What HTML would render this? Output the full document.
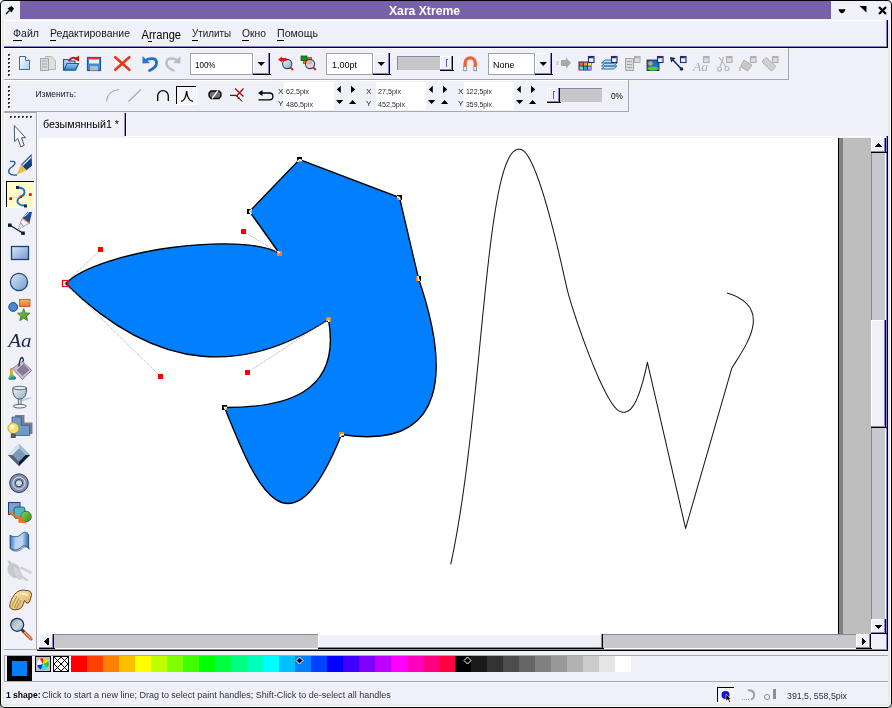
<!DOCTYPE html>
<html><head><meta charset="utf-8"><style>html,body{margin:0;padding:0;background:#fff;overflow:hidden}svg{display:block}text{font-family:"Liberation Sans",sans-serif}</style></head>
<body><svg width="892" height="708" viewBox="0 0 892 708" shape-rendering="crispEdges"><rect x="0" y="0" width="892" height="708" fill="#F0F0F8" /><rect x="20" y="1" width="811" height="18" fill="#7761A8" /><text x="389" y="14.5" font-size="12" font-weight="bold" fill="#fff" textLength="71" lengthAdjust="spacingAndGlyphs" >Xara Xtreme</text><rect x="4" y="20" width="884" height="28" fill="#F0F0F8" /><rect x="4" y="20" width="884" height="1" fill="#fff" /><rect x="4" y="20" width="1" height="27" fill="#fff" /><rect x="4" y="46" width="884" height="1" fill="#8A80C8" /><rect x="4" y="47" width="884" height="1" fill="#000" /><rect x="886" y="20" width="1" height="27" fill="#8A80C8" /><rect x="887" y="20" width="1" height="28" fill="#000" /><text x="13" y="37" font-size="11" font-weight="normal" fill="#181828" textLength="26" lengthAdjust="spacingAndGlyphs" >Файл</text><rect x="13" y="40" width="9" height="1" fill="#000" /><text x="50" y="37" font-size="11" font-weight="normal" fill="#181828" textLength="80" lengthAdjust="spacingAndGlyphs" >Редактирование</text><rect x="50" y="40" width="6" height="1" fill="#000" /><text x="192" y="37" font-size="11" font-weight="normal" fill="#181828" textLength="39" lengthAdjust="spacingAndGlyphs" >Утилиты</text><rect x="192" y="40" width="6" height="1" fill="#000" /><text x="242" y="37" font-size="11" font-weight="normal" fill="#181828" textLength="24" lengthAdjust="spacingAndGlyphs" >Окно</text><rect x="242" y="40" width="7" height="1" fill="#000" /><text x="277" y="37" font-size="11" font-weight="normal" fill="#181828" textLength="41" lengthAdjust="spacingAndGlyphs" >Помощь</text><rect x="277" y="40" width="7" height="1" fill="#000" /><text x="141.5" y="38.5" font-size="12" font-weight="normal" fill="#000" textLength="39.5" lengthAdjust="spacingAndGlyphs" >Arrange</text><rect x="148" y="41" width="4" height="1" fill="#000" /><rect x="4" y="48" width="784" height="1" fill="#fff" /><rect x="4" y="48" width="1" height="31" fill="#fff" /><rect x="4" y="79" width="784" height="1" fill="#A8A8B0" /><rect x="788" y="48" width="1" height="32" fill="#A8A8B0" /><rect x="4" y="80" width="624" height="1" fill="#fff" /><rect x="4" y="80" width="1" height="31" fill="#fff" /><rect x="4" y="111" width="624" height="1" fill="#A8A8B0" /><rect x="628" y="80" width="1" height="32" fill="#A8A8B0" /><rect x="8" y="54" width="2" height="1" fill="#303030" /><rect x="8" y="55" width="1" height="1" fill="#303030" /><rect x="9" y="55" width="1" height="1" fill="#909098" /><rect x="10" y="55" width="1" height="1" fill="#fff" /><rect x="9" y="56" width="2" height="1" fill="#fff" /><rect x="8" y="58" width="2" height="1" fill="#303030" /><rect x="8" y="59" width="1" height="1" fill="#303030" /><rect x="9" y="59" width="1" height="1" fill="#909098" /><rect x="10" y="59" width="1" height="1" fill="#fff" /><rect x="9" y="60" width="2" height="1" fill="#fff" /><rect x="8" y="62" width="2" height="1" fill="#303030" /><rect x="8" y="63" width="1" height="1" fill="#303030" /><rect x="9" y="63" width="1" height="1" fill="#909098" /><rect x="10" y="63" width="1" height="1" fill="#fff" /><rect x="9" y="64" width="2" height="1" fill="#fff" /><rect x="8" y="66" width="2" height="1" fill="#303030" /><rect x="8" y="67" width="1" height="1" fill="#303030" /><rect x="9" y="67" width="1" height="1" fill="#909098" /><rect x="10" y="67" width="1" height="1" fill="#fff" /><rect x="9" y="68" width="2" height="1" fill="#fff" /><rect x="8" y="70" width="2" height="1" fill="#303030" /><rect x="8" y="71" width="1" height="1" fill="#303030" /><rect x="9" y="71" width="1" height="1" fill="#909098" /><rect x="10" y="71" width="1" height="1" fill="#fff" /><rect x="9" y="72" width="2" height="1" fill="#fff" /><rect x="8" y="74" width="2" height="1" fill="#303030" /><rect x="8" y="75" width="1" height="1" fill="#303030" /><rect x="9" y="75" width="1" height="1" fill="#909098" /><rect x="10" y="75" width="1" height="1" fill="#fff" /><rect x="9" y="76" width="2" height="1" fill="#fff" /><rect x="8" y="86" width="2" height="1" fill="#303030" /><rect x="8" y="87" width="1" height="1" fill="#303030" /><rect x="9" y="87" width="1" height="1" fill="#909098" /><rect x="10" y="87" width="1" height="1" fill="#fff" /><rect x="9" y="88" width="2" height="1" fill="#fff" /><rect x="8" y="90" width="2" height="1" fill="#303030" /><rect x="8" y="91" width="1" height="1" fill="#303030" /><rect x="9" y="91" width="1" height="1" fill="#909098" /><rect x="10" y="91" width="1" height="1" fill="#fff" /><rect x="9" y="92" width="2" height="1" fill="#fff" /><rect x="8" y="94" width="2" height="1" fill="#303030" /><rect x="8" y="95" width="1" height="1" fill="#303030" /><rect x="9" y="95" width="1" height="1" fill="#909098" /><rect x="10" y="95" width="1" height="1" fill="#fff" /><rect x="9" y="96" width="2" height="1" fill="#fff" /><rect x="8" y="98" width="2" height="1" fill="#303030" /><rect x="8" y="99" width="1" height="1" fill="#303030" /><rect x="9" y="99" width="1" height="1" fill="#909098" /><rect x="10" y="99" width="1" height="1" fill="#fff" /><rect x="9" y="100" width="2" height="1" fill="#fff" /><rect x="8" y="102" width="2" height="1" fill="#303030" /><rect x="8" y="103" width="1" height="1" fill="#303030" /><rect x="9" y="103" width="1" height="1" fill="#909098" /><rect x="10" y="103" width="1" height="1" fill="#fff" /><rect x="9" y="104" width="2" height="1" fill="#fff" /><rect x="8" y="106" width="2" height="1" fill="#303030" /><rect x="8" y="107" width="1" height="1" fill="#303030" /><rect x="9" y="107" width="1" height="1" fill="#909098" /><rect x="10" y="107" width="1" height="1" fill="#fff" /><rect x="9" y="108" width="2" height="1" fill="#fff" /><rect x="4" y="112" width="1" height="537" fill="#fff" /><rect x="36" y="112" width="1" height="537" fill="#A8A8B0" /><rect x="4" y="112" width="32" height="1" fill="#A8A8B0" /><rect x="4" y="649" width="33" height="1" fill="#A8A8B0" /><rect x="10" y="116" width="2" height="1" fill="#303030" /><rect x="10" y="117" width="1" height="1" fill="#303030" /><rect x="11" y="117" width="1" height="1" fill="#909098" /><rect x="12" y="117" width="1" height="1" fill="#fff" /><rect x="11" y="118" width="2" height="1" fill="#fff" /><rect x="14" y="116" width="2" height="1" fill="#303030" /><rect x="14" y="117" width="1" height="1" fill="#303030" /><rect x="15" y="117" width="1" height="1" fill="#909098" /><rect x="16" y="117" width="1" height="1" fill="#fff" /><rect x="15" y="118" width="2" height="1" fill="#fff" /><rect x="18" y="116" width="2" height="1" fill="#303030" /><rect x="18" y="117" width="1" height="1" fill="#303030" /><rect x="19" y="117" width="1" height="1" fill="#909098" /><rect x="20" y="117" width="1" height="1" fill="#fff" /><rect x="19" y="118" width="2" height="1" fill="#fff" /><rect x="22" y="116" width="2" height="1" fill="#303030" /><rect x="22" y="117" width="1" height="1" fill="#303030" /><rect x="23" y="117" width="1" height="1" fill="#909098" /><rect x="24" y="117" width="1" height="1" fill="#fff" /><rect x="23" y="118" width="2" height="1" fill="#fff" /><rect x="26" y="116" width="2" height="1" fill="#303030" /><rect x="26" y="117" width="1" height="1" fill="#303030" /><rect x="27" y="117" width="1" height="1" fill="#909098" /><rect x="28" y="117" width="1" height="1" fill="#fff" /><rect x="27" y="118" width="2" height="1" fill="#fff" /><rect x="30" y="116" width="2" height="1" fill="#303030" /><rect x="30" y="117" width="1" height="1" fill="#303030" /><rect x="31" y="117" width="1" height="1" fill="#909098" /><rect x="32" y="117" width="1" height="1" fill="#fff" /><rect x="31" y="118" width="2" height="1" fill="#fff" /><text x="43" y="128" font-size="10" font-weight="normal" fill="#000" textLength="76" lengthAdjust="spacingAndGlyphs" >безымянный1 *</text><rect x="124" y="113" width="1" height="23" fill="#9890D0" /><rect x="125" y="113" width="1" height="23" fill="#000" /><rect x="126" y="113" width="1" height="23" fill="#fff" /><rect x="126" y="136" width="762" height="1" fill="#fff" /><rect x="37" y="112" width="1" height="537" fill="#fff" /><rect x="39" y="138" width="799" height="496" fill="#fff" /><g shape-rendering="auto"><path d="M65.5 283.4 C100.5 249.5 243.5 231.5 279.5 253.5 L249.5 211.5 L299.5 159.5 L399.5 197.5 L418.5 278.5 C448.1 365.2 451.1 451.7 341.5 434.5 C285.6 573.9 250.1 469.0 224.5 407.5 C280.8 407.6 342.1 396.0 328.5 319.5 C247.5 372.5 160.5 376.5 65.5 283.4 Z" fill="#0080FF" stroke="#000" stroke-width="1.4" stroke-linejoin="miter"/><path d="M450.70 564.50 L451.14 562.47 L451.64 560.08 L452.15 557.65 L452.65 555.20 L453.14 552.75 L453.62 550.30 L454.10 547.84 L454.57 545.39 L455.04 542.93 L455.49 540.47 L455.94 538.02 L456.39 535.55 L456.82 533.09 L457.25 530.63 L457.68 528.17 L458.10 525.70 L458.51 523.24 L458.92 520.77 L459.32 518.30 L459.72 515.83 L460.11 513.37 L460.50 510.90 L460.88 508.43 L461.26 505.95 L461.63 503.48 L462.00 501.01 L462.36 498.54 L462.72 496.06 L463.08 493.59 L463.43 491.11 L463.78 488.64 L464.12 486.16 L464.46 483.68 L464.80 481.21 L465.13 478.73 L465.46 476.25 L465.79 473.77 L466.11 471.29 L466.43 468.81 L466.75 466.33 L467.07 463.85 L467.38 461.37 L467.68 458.89 L467.99 456.41 L468.29 453.93 L468.59 451.45 L468.89 448.97 L469.19 446.48 L469.48 444.00 L469.77 441.52 L470.06 439.03 L470.34 436.55 L470.63 434.07 L470.91 431.58 L471.19 429.10 L471.47 426.61 L471.74 424.13 L472.02 421.64 L472.29 419.16 L472.56 416.67 L472.83 414.19 L473.10 411.70 L473.36 409.22 L473.63 406.73 L473.89 404.24 L474.15 401.76 L474.41 399.27 L474.67 396.78 L474.92 394.30 L475.18 391.81 L475.44 389.32 L475.69 386.84 L475.94 384.35 L476.19 381.86 L476.45 379.38 L476.70 376.89 L476.95 374.40 L477.19 371.91 L477.44 369.43 L477.69 366.94 L477.94 364.45 L478.18 361.96 L478.43 359.47 L478.67 356.99 L478.92 354.50 L479.16 352.01 L479.41 349.52 L479.65 347.03 L479.90 344.55 L480.14 342.06 L480.38 339.57 L480.63 337.08 L480.87 334.59 L481.12 332.11 L481.36 329.62 L481.60 327.13 L481.85 324.64 L482.10 322.15 L482.34 319.67 L482.59 317.18 L482.84 314.69 L483.08 312.20 L483.33 309.71 L483.58 307.23 L483.83 304.74 L484.08 302.25 L484.34 299.77 L484.59 297.28 L484.85 294.79 L485.10 292.30 L485.36 289.82 L485.62 287.33 L485.88 284.85 L486.14 282.36 L486.41 279.87 L486.68 277.39 L486.95 274.90 L487.22 272.42 L487.49 269.93 L487.77 267.45 L488.05 264.96 L488.33 262.48 L488.61 259.99 L488.90 257.51 L489.19 255.03 L489.49 252.55 L489.78 250.06 L490.09 247.58 L490.39 245.10 L490.70 242.62 L491.02 240.14 L491.34 237.66 L491.66 235.18 L491.99 232.70 L492.33 230.23 L492.67 227.75 L493.02 225.27 L493.37 222.80 L493.73 220.33 L494.10 217.85 L494.48 215.38 L494.87 212.91 L495.26 210.44 L495.67 207.98 L496.08 205.51 L496.51 203.05 L496.95 200.59 L497.40 198.13 L497.86 195.67 L498.34 193.22 L498.84 190.77 L499.36 188.32 L499.89 185.88 L500.45 183.44 L501.03 181.01 L501.63 178.59 L502.27 176.17 L502.94 173.76 L503.65 171.36 L504.40 168.98 L505.21 166.61 L506.07 164.27 L507.00 161.95 L508.03 159.67 L509.16 157.45 L510.43 155.31 L511.88 153.29 L513.57 151.49 L515.53 150.06 L517.75 149.22 L520.06 149.19 L522.26 150.00 L524.19 151.45 L525.86 153.27 L527.34 155.27 L528.67 157.38 L529.91 159.55 L531.06 161.77 L532.15 164.02 L533.19 166.29 L534.18 168.59 L535.13 170.90 L536.06 173.22 L536.95 175.56 L537.82 177.90 L538.66 180.25 L539.49 182.61 L540.30 184.98 L541.08 187.35 L541.86 189.73 L542.62 192.11 L543.36 194.50 L544.10 196.89 L544.82 199.28 L545.53 201.68 L546.23 204.08 L546.92 206.48 L547.61 208.88 L548.28 211.29 L548.95 213.70 L549.60 216.11 L550.25 218.53 L550.90 220.94 L551.53 223.36 L552.17 225.78 L552.79 228.20 L553.41 230.62 L554.02 233.04 L554.63 235.47 L555.23 237.90 L555.83 240.32 L556.42 242.75 L557.01 245.18 L557.60 247.61 L558.18 250.04 L558.75 252.48 L559.32 254.91 L559.89 257.35 L560.46 259.78 L561.02 262.22 L561.58 264.65 L562.13 267.09 L562.68 269.53 L563.23 271.97 L563.78 274.41 L564.33 276.85 L564.87 279.29 L565.42 281.73 L565.97 284.17 L566.52 286.60 L567.09 289.04 L567.69 291.46 L568.33 293.88 L569.00 296.29 L569.70 298.69 L570.42 301.08 L571.15 303.47 L571.89 305.86 L572.65 308.24 L573.41 310.63 L574.18 313.00 L574.96 315.38 L575.75 317.75 L576.54 320.12 L577.34 322.49 L578.15 324.86 L578.96 327.22 L579.79 329.58 L580.61 331.94 L581.45 334.30 L582.29 336.65 L583.14 339.00 L584.00 341.35 L584.86 343.70 L585.73 346.04 L586.61 348.38 L587.50 350.72 L588.39 353.05 L589.29 355.38 L590.21 357.71 L591.13 360.04 L592.06 362.36 L593.00 364.67 L593.95 366.98 L594.91 369.29 L595.88 371.59 L596.87 373.89 L597.87 376.18 L598.88 378.47 L599.91 380.75 L600.96 383.02 L602.03 385.28 L603.12 387.53 L604.23 389.77 L605.36 391.99 L606.53 394.20 L607.73 396.40 L608.97 398.57 L610.26 400.71 L611.60 402.81 L613.02 404.87 L614.54 406.85 L616.20 408.70 L618.04 410.33 L620.14 411.54 L622.45 412.15 L624.86 412.13 L627.18 411.49 L629.26 410.26 L631.07 408.60 L632.63 406.67 L633.99 404.59 L635.20 402.41 L636.30 400.17 L637.31 397.88 L638.25 395.57 L639.13 393.23 L639.96 390.87 L640.74 388.49 L641.48 386.11 L642.19 383.71 L642.87 381.30 L643.52 378.89 L644.15 376.47 L644.75 374.04 L645.34 371.61 L645.90 369.18 L646.45 366.76 L646.97 364.38 L647.41 362.34 L685.6 528.4 L731.8 368.2 C744.2 347.7 775.8 307.6 727.1 293.1" fill="none" stroke="#1A1A1A" stroke-width="1.05" stroke-linejoin="round"/><path d="M65.5 283.4 L100.5 249.5" stroke="#A8A8A8" stroke-width="1" stroke-dasharray="1 1"/><path d="M65.5 283.4 L160.5 376.5" stroke="#A8A8A8" stroke-width="1" stroke-dasharray="1 1"/><path d="M279.5 253.5 L243.5 231.5" stroke="#A8A8A8" stroke-width="1" stroke-dasharray="1 1"/><path d="M328.5 319.5 L247.5 372.5" stroke="#A8A8A8" stroke-width="1" stroke-dasharray="1 1"/><rect x="247" y="209" width="5" height="5" fill="#fff" style="mix-blend-mode:difference" shape-rendering="crispEdges"/><rect x="297" y="157" width="5" height="5" fill="#fff" style="mix-blend-mode:difference" shape-rendering="crispEdges"/><rect x="397" y="195" width="5" height="5" fill="#fff" style="mix-blend-mode:difference" shape-rendering="crispEdges"/><rect x="222" y="405" width="5" height="5" fill="#fff" style="mix-blend-mode:difference" shape-rendering="crispEdges"/><rect x="277" y="251" width="5" height="5" fill="#fff" style="mix-blend-mode:difference" shape-rendering="crispEdges"/><rect x="416" y="276" width="5" height="5" fill="#fff" style="mix-blend-mode:difference" shape-rendering="crispEdges"/><rect x="326" y="317" width="5" height="5" fill="#fff" style="mix-blend-mode:difference" shape-rendering="crispEdges"/><rect x="339" y="432" width="5" height="5" fill="#fff" style="mix-blend-mode:difference" shape-rendering="crispEdges"/><rect x="98" y="247" width="5" height="5" fill="#F00"/><rect x="241" y="229" width="5" height="5" fill="#F00"/><rect x="158" y="374" width="5" height="5" fill="#F00"/><rect x="245" y="370" width="5" height="5" fill="#F00"/><rect x="62.5" y="280.5" width="5.5" height="6" fill="none" stroke="#F00" stroke-width="1.2"/></g><rect x="838" y="138" width="1" height="496" fill="#000" /><rect x="839" y="138" width="4" height="496" fill="#808080" /><rect x="843" y="138" width="28" height="496" fill="#BEBEBE" /><rect x="871" y="138" width="15" height="496" fill="#C8C8CC" /><rect x="871" y="152" width="1" height="467" fill="#888898" /><rect x="885" y="152" width="1" height="467" fill="#fff" /><rect x="39" y="634" width="832" height="15" fill="#C8C8CC" /><rect x="54" y="634" width="802" height="1" fill="#888898" /><rect x="54" y="648" width="802" height="1" fill="#fff" /><rect x="37" y="649" width="851" height="1" fill="#8A80C8" /><rect x="37" y="650" width="851" height="1" fill="#000" /><rect x="886" y="136" width="1" height="514" fill="#8A80C8" /><rect x="887" y="136" width="1" height="515" fill="#000" /><rect x="871" y="138" width="15" height="15" fill="#F0F0F8" /><rect x="871" y="138" width="15" height="1" fill="#fff" /><rect x="871" y="138" width="1" height="15" fill="#fff" /><rect x="871" y="151" width="15" height="1" fill="#8A80C8" /><rect x="871" y="152" width="16" height="1" fill="#000" /><rect x="884" y="138" width="1" height="14" fill="#8A80C8" /><rect x="885" y="138" width="1" height="15" fill="#000" /><path d="M874.5 147 L878.5 142.8 L882.5 147 Z" fill="#000"/><rect x="871" y="619" width="15" height="15" fill="#F0F0F8" /><rect x="871" y="619" width="15" height="1" fill="#fff" /><rect x="871" y="619" width="1" height="15" fill="#fff" /><rect x="871" y="632" width="15" height="1" fill="#8A80C8" /><rect x="871" y="633" width="16" height="1" fill="#000" /><rect x="884" y="619" width="1" height="14" fill="#8A80C8" /><rect x="885" y="619" width="1" height="15" fill="#000" /><path d="M874.5 625 L882.5 625 L878.5 629.2 Z" fill="#000"/><rect x="871" y="320" width="15" height="108" fill="#F0F0F8" /><rect x="871" y="320" width="15" height="1" fill="#fff" /><rect x="871" y="320" width="1" height="108" fill="#fff" /><rect x="871" y="426" width="15" height="1" fill="#8A80C8" /><rect x="871" y="427" width="16" height="1" fill="#000" /><rect x="884" y="320" width="1" height="107" fill="#8A80C8" /><rect x="885" y="320" width="1" height="108" fill="#000" /><rect x="39" y="634" width="15" height="15" fill="#F0F0F8" /><rect x="39" y="634" width="15" height="1" fill="#fff" /><rect x="39" y="634" width="1" height="15" fill="#fff" /><rect x="39" y="647" width="15" height="1" fill="#8A80C8" /><rect x="39" y="648" width="16" height="1" fill="#000" /><rect x="52" y="634" width="1" height="14" fill="#8A80C8" /><rect x="53" y="634" width="1" height="15" fill="#000" /><path d="M48.5 637.5 L48.5 645.5 L43.5 641.5 Z" fill="#000"/><rect x="856" y="634" width="15" height="15" fill="#F0F0F8" /><rect x="856" y="634" width="15" height="1" fill="#fff" /><rect x="856" y="634" width="1" height="15" fill="#fff" /><rect x="856" y="647" width="15" height="1" fill="#8A80C8" /><rect x="856" y="648" width="16" height="1" fill="#000" /><rect x="869" y="634" width="1" height="14" fill="#8A80C8" /><rect x="870" y="634" width="1" height="15" fill="#000" /><path d="M861.8 637.5 L861.8 645.5 L866.2 641.5 Z" fill="#000"/><rect x="318" y="634" width="285" height="15" fill="#F0F0F8" /><rect x="318" y="634" width="285" height="1" fill="#fff" /><rect x="318" y="634" width="1" height="15" fill="#fff" /><rect x="318" y="647" width="285" height="1" fill="#8A80C8" /><rect x="318" y="648" width="286" height="1" fill="#000" /><rect x="601" y="634" width="1" height="14" fill="#8A80C8" /><rect x="602" y="634" width="1" height="15" fill="#000" /><rect x="4" y="655" width="884" height="1" fill="#A8A8B0" /><rect x="4" y="681" width="884" height="1" fill="#A8A8B0" /><rect x="4" y="655" width="1" height="26" fill="#A8A8B0" /><rect x="7" y="656" width="25" height="25" fill="#000" /><rect x="12" y="661" width="15" height="15" fill="#0080FF" /><rect x="35" y="656" width="16" height="16" fill="#000" /><rect x="36" y="657" width="14" height="14" fill="#C0C0C0" /><rect x="53" y="656" width="16" height="16" fill="#000" /><rect x="54" y="657" width="14" height="14" fill="#fff" /><rect x="71" y="656" width="16" height="16" fill="#FF0000" /><rect x="87" y="656" width="16" height="16" fill="#FF4000" /><rect x="103" y="656" width="16" height="16" fill="#FF8000" /><rect x="119" y="656" width="16" height="16" fill="#FFBF00" /><rect x="135" y="656" width="16" height="16" fill="#FFFF00" /><rect x="151" y="656" width="16" height="16" fill="#BFFF00" /><rect x="167" y="656" width="16" height="16" fill="#80FF00" /><rect x="183" y="656" width="16" height="16" fill="#40FF00" /><rect x="199" y="656" width="16" height="16" fill="#00FF00" /><rect x="215" y="656" width="16" height="16" fill="#00FF40" /><rect x="231" y="656" width="16" height="16" fill="#00FF80" /><rect x="247" y="656" width="16" height="16" fill="#00FFBF" /><rect x="263" y="656" width="16" height="16" fill="#00FFFF" /><rect x="279" y="656" width="16" height="16" fill="#00BFFF" /><rect x="295" y="656" width="16" height="16" fill="#0080FF" /><rect x="311" y="656" width="16" height="16" fill="#0040FF" /><rect x="327" y="656" width="16" height="16" fill="#0000FF" /><rect x="343" y="656" width="16" height="16" fill="#4000FF" /><rect x="359" y="656" width="16" height="16" fill="#8000FF" /><rect x="375" y="656" width="16" height="16" fill="#BF00FF" /><rect x="391" y="656" width="16" height="16" fill="#FF00FF" /><rect x="407" y="656" width="16" height="16" fill="#FF00BF" /><rect x="423" y="656" width="16" height="16" fill="#FF0080" /><rect x="439" y="656" width="16" height="16" fill="#FF0040" /><rect x="455" y="656" width="16" height="16" fill="#000000" /><rect x="471" y="656" width="16" height="16" fill="#1A1A1A" /><rect x="487" y="656" width="16" height="16" fill="#333333" /><rect x="503" y="656" width="16" height="16" fill="#4D4D4D" /><rect x="519" y="656" width="16" height="16" fill="#666666" /><rect x="535" y="656" width="16" height="16" fill="#808080" /><rect x="551" y="656" width="16" height="16" fill="#999999" /><rect x="567" y="656" width="16" height="16" fill="#B3B3B3" /><rect x="583" y="656" width="16" height="16" fill="#CCCCCC" /><rect x="599" y="656" width="16" height="16" fill="#E6E6E6" /><rect x="615" y="656" width="16" height="16" fill="#FFFFFF" /><rect x="190" y="53" width="63" height="22" fill="#fff" /><rect x="190" y="53" width="63" height="1" fill="#A0A0A8" /><rect x="190" y="53" width="1" height="22" fill="#A0A0A8" /><rect x="190" y="74" width="63" height="1" fill="#A0A0A8" /><rect x="252" y="53" width="1" height="22" fill="#A0A0A8" /><rect x="253" y="53" width="17" height="22" fill="#F0F0F8" /><rect x="253" y="53" width="17" height="1" fill="#fff" /><rect x="253" y="53" width="1" height="22" fill="#fff" /><rect x="253" y="73" width="17" height="1" fill="#8A80C8" /><rect x="253" y="74" width="18" height="1" fill="#000" /><rect x="268" y="53" width="1" height="21" fill="#8A80C8" /><rect x="269" y="53" width="1" height="22" fill="#000" /><text x="195" y="68" font-size="9" font-weight="normal" fill="#000" textLength="20.5" lengthAdjust="spacingAndGlyphs" >100%</text><rect x="326" y="53" width="47" height="22" fill="#fff" /><rect x="326" y="53" width="47" height="1" fill="#A0A0A8" /><rect x="326" y="53" width="1" height="22" fill="#A0A0A8" /><rect x="326" y="74" width="47" height="1" fill="#A0A0A8" /><rect x="372" y="53" width="1" height="22" fill="#A0A0A8" /><rect x="373" y="53" width="17" height="22" fill="#F0F0F8" /><rect x="373" y="53" width="17" height="1" fill="#fff" /><rect x="373" y="53" width="1" height="22" fill="#fff" /><rect x="373" y="73" width="17" height="1" fill="#8A80C8" /><rect x="373" y="74" width="18" height="1" fill="#000" /><rect x="388" y="53" width="1" height="21" fill="#8A80C8" /><rect x="389" y="53" width="1" height="22" fill="#000" /><text x="332" y="68" font-size="9" font-weight="normal" fill="#000" textLength="25" lengthAdjust="spacingAndGlyphs" >1,00pt</text><rect x="488" y="53" width="47" height="22" fill="#fff" /><rect x="488" y="53" width="47" height="1" fill="#A0A0A8" /><rect x="488" y="53" width="1" height="22" fill="#A0A0A8" /><rect x="488" y="74" width="47" height="1" fill="#A0A0A8" /><rect x="534" y="53" width="1" height="22" fill="#A0A0A8" /><rect x="535" y="53" width="17" height="22" fill="#F0F0F8" /><rect x="535" y="53" width="17" height="1" fill="#fff" /><rect x="535" y="53" width="1" height="22" fill="#fff" /><rect x="535" y="73" width="17" height="1" fill="#8A80C8" /><rect x="535" y="74" width="18" height="1" fill="#000" /><rect x="550" y="53" width="1" height="21" fill="#8A80C8" /><rect x="551" y="53" width="1" height="22" fill="#000" /><text x="493" y="68" font-size="9" font-weight="normal" fill="#000" textLength="21.5" lengthAdjust="spacingAndGlyphs" >None</text><text x="35.5" y="97.2" font-size="9" font-weight="normal" fill="#202030" textLength="40.5" lengthAdjust="spacingAndGlyphs" >Изменить:</text><rect x="284" y="82" width="50" height="28" fill="#fff" /><text x="286" y="94" font-size="8" font-weight="normal" fill="#282838" textLength="23" lengthAdjust="spacingAndGlyphs" >62,5pix</text><text x="286" y="107.3" font-size="8" font-weight="normal" fill="#282838" textLength="27" lengthAdjust="spacingAndGlyphs" >486,5pix</text><rect x="376" y="82" width="50" height="28" fill="#fff" /><text x="378" y="94" font-size="8" font-weight="normal" fill="#282838" textLength="23" lengthAdjust="spacingAndGlyphs" >27,5pix</text><text x="378" y="107.3" font-size="8" font-weight="normal" fill="#282838" textLength="27" lengthAdjust="spacingAndGlyphs" >452,5pix</text><rect x="464" y="82" width="50" height="28" fill="#fff" /><text x="466" y="94" font-size="8" font-weight="normal" fill="#282838" textLength="26" lengthAdjust="spacingAndGlyphs" >122,5pix</text><text x="466" y="107.3" font-size="8" font-weight="normal" fill="#282838" textLength="26" lengthAdjust="spacingAndGlyphs" >359,5pix</text><text x="278" y="93.5" font-size="8" font-weight="normal" fill="#282838" textLength="5.5" lengthAdjust="spacingAndGlyphs" >X</text><text x="278" y="106" font-size="8" font-weight="normal" fill="#282838" textLength="5.5" lengthAdjust="spacingAndGlyphs" >Y</text><text x="366" y="93.5" font-size="8" font-weight="normal" fill="#282838" textLength="5.5" lengthAdjust="spacingAndGlyphs" >X</text><text x="366" y="106" font-size="8" font-weight="normal" fill="#282838" textLength="5.5" lengthAdjust="spacingAndGlyphs" >Y</text><text x="458" y="93.5" font-size="8" font-weight="normal" fill="#282838" textLength="5.5" lengthAdjust="spacingAndGlyphs" >X</text><text x="458" y="106" font-size="8" font-weight="normal" fill="#282838" textLength="5.5" lengthAdjust="spacingAndGlyphs" >Y</text><text x="611" y="99" font-size="9" font-weight="normal" fill="#000" textLength="12" lengthAdjust="spacingAndGlyphs" >0%</text><text x="6" y="698" font-size="8.5" font-weight="bold" fill="#000" textLength="34.6" lengthAdjust="spacingAndGlyphs" >1 shape:</text><text x="42" y="698" font-size="8.5" font-weight="normal" fill="#303040" textLength="348.7" lengthAdjust="spacingAndGlyphs" >Click to start a new line; Drag to select paint handles; Shift-Click to de-select all handles</text><text x="787" y="699" font-size="8.5" font-weight="normal" fill="#303040" textLength="60" lengthAdjust="spacingAndGlyphs" >391,5, 558,5pix</text><rect x="1" y="1" width="1" height="706" fill="#fff" /><rect x="2" y="20" width="1" height="686" fill="#E4ECE8" /><rect x="3" y="20" width="1" height="686" fill="#E4ECE8" /><rect x="890" y="20" width="1" height="687" fill="#fff" /><rect x="888" y="20" width="1" height="686" fill="#E4ECE8" /><rect x="889" y="20" width="1" height="686" fill="#E4ECE8" /><rect x="1" y="706" width="890" height="1" fill="#fff" /><rect x="2" y="704" width="888" height="1" fill="#E4ECE8" /><rect x="2" y="705" width="888" height="1" fill="#E4ECE8" /><g shape-rendering="auto"><path d="M0.5 707.5 V5 Q0.5 0.5 5 0.5 H887 Q891.5 0.5 891.5 5 V703 Q891.5 707.5 887 707.5 H5 Q0.5 707.5 0.5 703" fill="none" stroke="#000" stroke-width="1"/></g><path d="M0 704 V708 H4 Q0.5 707.5 0 704 Z M892 704 V708 H888 Q891.5 707.5 892 704 Z" fill="#A8A8A8" shape-rendering="auto"/><defs>
<linearGradient id="gDoc" x1="0" y1="0" x2="1" y2="1"><stop offset="0" stop-color="#fff"/><stop offset="1" stop-color="#A8D0F0"/></linearGradient>
<linearGradient id="gBlue" x1="0" y1="0" x2="1" y2="1"><stop offset="0" stop-color="#D8E8F8"/><stop offset="1" stop-color="#6E9ACB"/></linearGradient>
<linearGradient id="gBlue2" x1="0" y1="0" x2="0" y2="1"><stop offset="0" stop-color="#9CC8F0"/><stop offset="1" stop-color="#2F80D0"/></linearGradient>
<linearGradient id="gGlass" x1="0" y1="0" x2="1" y2="1"><stop offset="0" stop-color="#F0F4F8"/><stop offset="1" stop-color="#8EA8C0"/></linearGradient>
<linearGradient id="gPurp" x1="0" y1="0" x2="1" y2="1"><stop offset="0" stop-color="#C8C0D8"/><stop offset="1" stop-color="#706080"/></linearGradient>
<linearGradient id="gGreen" x1="0" y1="0" x2="1" y2="1"><stop offset="0" stop-color="#90D060"/><stop offset="1" stop-color="#3A8A20"/></linearGradient>
<linearGradient id="gOrange" x1="0" y1="0" x2="0" y2="1"><stop offset="0" stop-color="#FFB070"/><stop offset="1" stop-color="#F07020"/></linearGradient>
<linearGradient id="gHand" x1="0" y1="0" x2="1" y2="1"><stop offset="0" stop-color="#FFF0C0"/><stop offset="1" stop-color="#D8A848"/></linearGradient>
<linearGradient id="gRain" x1="0" y1="0" x2="1" y2="0"><stop offset="0" stop-color="#F0C000"/><stop offset=".35" stop-color="#50C040"/><stop offset=".7" stop-color="#20A0E0"/><stop offset="1" stop-color="#E05090"/></linearGradient>
</defs><g shape-rendering="auto"><path d="M7.5 8.5 L11.5 6 L14 8.5 L11.5 12.5 Z" fill="#000"/><path d="M6 14 L9.5 10.5" stroke="#000" stroke-width="1.2"/><path d="M19.5 56.5 H25.5 L29.5 60.5 V69.5 H19.5 Z" fill="url(#gDoc)" stroke="#3A70A8" stroke-width="1"/><path d="M25.5 56.5 V60.5 H29.5" fill="#fff" stroke="#3A70A8" stroke-width="1"/><path d="M45.5 56.5 H51.5 L55.5 60.5 V69.5 H45.5 Z" fill="#E0E0E0" stroke="#B8B8B8"/><rect x="40.5" y="58.5" width="8" height="12" fill="#D8D8D8" stroke="#A8A8A8"/><path d="M42 61 H47 M42 64 H47 M42 67 H47" stroke="#A8A8A8"/><path d="M63.5 70 V59.5 H68 L69.5 61 H75 V63" fill="#A8CCF0" stroke="#1E6090" stroke-width="1.2"/><path d="M63.8 70.2 L67 63.5 H78.5 L75.5 70.2 Z" fill="url(#gBlue2)" stroke="#1E6090" stroke-width="1.2"/><path d="M69 61 Q72 56 76 58.5" fill="none" stroke="#B02010" stroke-width="2"/><path d="M79 55.5 L79 61.5 L74 59 Z" fill="#B02010"/><rect x="87.5" y="57.5" width="13" height="13" fill="#3A90E0" stroke="#1E5A8A" stroke-width="1.2"/><rect x="89" y="57.5" width="10" height="2" fill="#F03010"/><rect x="89" y="59.5" width="10" height="4" fill="#E8F4FC"/><rect x="90" y="66" width="8" height="4.5" fill="#B8B8B8"/><path d="M115.2 57.3 L129.3 69.7 M129.3 57.3 L115.2 69.7" stroke="#E43A18" stroke-width="2.7" stroke-linecap="round"/><path d="M147 59.5 Q156.5 56.5 156.5 63 Q156.5 67.5 149.5 70.5" fill="none" stroke="#2470C0" stroke-width="2.8" stroke-linecap="round"/><path d="M142.5 56 L142.5 63.5 L150 63 Z" fill="#2878C8"/><path d="M176 59.5 Q166.5 56.5 166.5 63 Q166.5 67.5 173.5 70.5" fill="none" stroke="#BDBDBD" stroke-width="2.4" stroke-linecap="round"/><path d="M180.5 56 L180.5 63.5 L173 63 Z" fill="#BDBDBD"/><path d="M257.5 62 L265 62 L261.25 66 Z" fill="#000"/><circle cx="287.2" cy="64" r="4.6" fill="url(#gGlass)" stroke="#1E4A78" stroke-width="1.1"/><path d="M290.5 67.5 L293 70" stroke="#D03018" stroke-width="2"/><path d="M278 59.5 L282 56.5 V58 H286.5 V61 H282 V62.5 Z" fill="#D82010"/><rect x="303.5" y="57.5" width="8" height="6" fill="#F06A20" stroke="#C04010" stroke-width=".8"/><rect x="301" y="56" width="6" height="4.5" fill="#1A9020" stroke="#0A6010" stroke-width=".8"/><circle cx="310" cy="64" r="4.6" fill="#E8C0C0" fill-opacity=".8" stroke="#1E4A78" stroke-width="1.1"/><path d="M313.3 67.5 L315.8 70" stroke="#D03018" stroke-width="2"/><path d="M377.5 62 L385 62 L381.25 66 Z" fill="#000"/><rect x="397" y="56" width="43" height="14" fill="#C8C8CC"/><rect x="397" y="56" width="43" height="1" fill="#8A8A98"/><rect x="397" y="56" width="1" height="14" fill="#8A8A98"/><path d="M465.1 66.5 V63 A5.1 5.1 0 0 1 475.3 63 V66.5" fill="none" stroke="#F06030" stroke-width="3.3"/><rect x="463.8" y="66.3" width="2.7" height="4.5" fill="#F8F8F8" stroke="#606060" stroke-width=".6"/><rect x="473.9" y="66.3" width="2.7" height="4.5" fill="#F8F8F8" stroke="#606060" stroke-width=".6"/><path d="M539.5 62 L547 62 L543.25 66 Z" fill="#000"/><path d="M561 60 L566 60 L566 57.5 L571 63 L566 68.5 L566 66 L561 66 Z" fill="#A8A8A8"/><rect x="556" y="61" width="3" height="4" fill="#D8D8D8"/><rect x="578.5" y="61.5" width="13" height="9" fill="#2A2A6A"/><rect x="579.5" y="62.5" width="3.4" height="3.2" fill="#F05858"/><rect x="583.8" y="62.5" width="3.4" height="3.2" fill="#F09A28"/><rect x="588" y="62.5" width="3" height="3.2" fill="#F0E070"/><rect x="579.5" y="66.5" width="3.4" height="3.3" fill="#80E080"/><rect x="583.8" y="66.5" width="3.4" height="3.3" fill="#20A0F0"/><rect x="588" y="66.5" width="3" height="3.3" fill="#A0A0F0"/><rect x="588.5" y="56.5" width="5.5" height="6" fill="#E0F0FF" stroke="#2A2A6A" stroke-width="1.1"/><rect x="589" y="57" width="4.5" height="1.2" fill="#2A2A6A"/><path d="M601.5 69 L605 66 H617 L613.5 69 Z M601.5 66 L605 63 H617 L613.5 66 Z M601.5 63 L605 60 H617 L613.5 63 Z" fill="#C0E0F8" stroke="#2870B0" stroke-width="1"/><rect x="611.5" y="56.5" width="5.5" height="6" fill="#E0F0FF" stroke="#2A2A6A" stroke-width="1.1"/><rect x="612" y="57" width="4.5" height="1.2" fill="#2A2A6A"/><rect x="625.5" y="58.5" width="8" height="12" fill="#D8D8D8" stroke="#A8A8A8"/><path d="M627 61.5 H632 M627 64.5 H632 M627 67.5 H632" stroke="#A8A8A8"/><rect x="634.5" y="56.5" width="5.5" height="6" fill="#DCDCDC" stroke="#B0B0B0" stroke-width="1.1"/><rect x="635" y="57" width="4.5" height="1.2" fill="#B0B0B0"/><rect x="647" y="60" width="12" height="10.5" fill="#1070E0" stroke="#102040" stroke-width=".8"/><circle cx="650.5" cy="63.5" r="2.2" fill="#F0A020"/><ellipse cx="653" cy="68.5" rx="5.5" ry="2" fill="#50D030"/><rect x="657.5" y="56.5" width="5.5" height="6" fill="#E0F0FF" stroke="#2A2A6A" stroke-width="1.1"/><rect x="658" y="57" width="4.5" height="1.2" fill="#2A2A6A"/><path d="M671.5 58.5 L681 68.5" stroke="#10305A" stroke-width="1.6"/><circle cx="681.5" cy="69" r="1.8" fill="#10305A"/><path d="M670 57 L675.5 58 L671 62.5 Z" fill="#10305A"/><rect x="680.5" y="56.5" width="5.5" height="6" fill="#E0F0FF" stroke="#2A2A6A" stroke-width="1.1"/><rect x="681" y="57" width="4.5" height="1.2" fill="#2A2A6A"/><text x="693" y="71" style="font-family:Liberation Serif,serif;font-style:italic" font-size="13" fill="#B0B0B0" textLength="15" lengthAdjust="spacingAndGlyphs">Aa</text><rect x="703.5" y="56.5" width="5.5" height="6" fill="#DCDCDC" stroke="#B0B0B0" stroke-width="1.1"/><rect x="704" y="57" width="4.5" height="1.2" fill="#B0B0B0"/><path d="M719 57 L726 67 M723.5 57 L720 67" stroke="#B8B8B8" stroke-width="1.2"/><circle cx="719.5" cy="69" r="2" fill="none" stroke="#B8B8B8" stroke-width="1.2"/><circle cx="727" cy="68.5" r="2" fill="none" stroke="#B8B8B8" stroke-width="1.2"/><rect x="726.5" y="56.5" width="5.5" height="6" fill="#DCDCDC" stroke="#B0B0B0" stroke-width="1.1"/><rect x="727" y="57" width="4.5" height="1.2" fill="#B0B0B0"/><path d="M744 60 L752 65 L747.5 71 L740.5 66.5 Z" fill="#C8C8C8" stroke="#B0B0B0"/><path d="M740 67 V71" stroke="#B8B8B8" stroke-width="1.5"/><rect x="750.5" y="56.5" width="5.5" height="6" fill="#DCDCDC" stroke="#B0B0B0" stroke-width="1.1"/><rect x="751" y="57" width="4.5" height="1.2" fill="#B0B0B0"/><path d="M763 60 L766.5 57.5 L776 66.5 L771.5 71 L762.5 62.5 Z" fill="#D0D0D0" stroke="#B0B0B0"/><rect x="772.5" y="56.5" width="5.5" height="6" fill="#DCDCDC" stroke="#B0B0B0" stroke-width="1.1"/><rect x="773" y="57" width="4.5" height="1.2" fill="#B0B0B0"/><path d="M106.5 101.5 Q107.5 91 119 89.5" fill="none" stroke="#A8A8A8" stroke-width="1.1"/><path d="M128.5 101.5 L141 89.5" fill="none" stroke="#A8A8A8" stroke-width="1.1"/><path d="M157.7 101 V96 A5.3 5.3 0 0 1 168.3 96 V101" fill="none" stroke="#000" stroke-width="1.3"/><rect x="176" y="86" width="20" height="18" fill="#F4F4FA"/><rect x="176" y="86" width="20" height="1" fill="#000"/><rect x="176" y="86" width="1" height="18" fill="#000"/><rect x="176" y="104" width="21" height="1" fill="#fff"/><rect x="196" y="86" width="1" height="19" fill="#fff"/><path d="M181 101.3 Q185.5 101.3 186.6 91 Q187.7 101.3 193 101.3" fill="none" stroke="#000" stroke-width="1.2"/><path d="M209 93 L211 91 H219 L221 93 V96 L219 98.5 H211 L209 96 Z" fill="#707070" stroke="#000" stroke-width="1.3"/><path d="M212 98.5 L218 90.5" stroke="#fff" stroke-width="1.3"/><path d="M230 95.3 H236.5 L242 101.5" fill="none" stroke="#000" stroke-width="1"/><path d="M235 88.5 L243.5 96.5 M243.5 88.5 L236 96.5" stroke="#A01010" stroke-width="1.3"/><rect x="237.5" y="97" width="2" height="2" fill="#E01010"/><path d="M260 93 H269.5 A3.4 3.4 0 0 1 269.5 99.8 H258.5" fill="none" stroke="#000" stroke-width="1.3"/><path d="M258 93 L262.5 90 V96 Z" fill="#000"/><path d="M340.8 85.8 V93.1 L336.8 89.45 Z M351 85.8 V93.1 L355.3 89.45 Z" fill="#000"/><path d="M336 100 H343.2 L339.6 104.1 Z M349 104.1 H356.2 L352.6 100 Z" fill="#000"/><path d="M432.8 85.8 V93.1 L428.8 89.45 Z M443 85.8 V93.1 L447.3 89.45 Z" fill="#000"/><path d="M428 100 H435.2 L431.6 104.1 Z M441 104.1 H448.2 L444.6 100 Z" fill="#000"/><path d="M520.8 85.8 V93.1 L516.8 89.45 Z M531 85.8 V93.1 L535.3 89.45 Z" fill="#000"/><path d="M516 100 H523.2 L519.6 104.1 Z M529 104.1 H536.2 L532.6 100 Z" fill="#000"/><rect x="547" y="88" width="55" height="14" fill="#C8C8CC"/><rect x="547" y="88" width="55" height="1" fill="#8A8A98"/><rect x="547" y="88" width="1" height="14" fill="#8A8A98"/><path d="M14.3 125.5 L14.6 141.5 L17.8 138.5 L20.8 146.8 L24.2 145.4 L21.5 137.8 L25.6 137.8 Z" fill="#F4F6F8" stroke="#485868" stroke-width="1" stroke-linejoin="round"/><path d="M10.5 161.5 Q15.5 160.8 15 163.5 Q14 166 10.5 168 Q8 170 9 173 Q11 175.5 16.5 175" fill="none" stroke="#1E58A8" stroke-width="1.3" stroke-linecap="round"/><path d="M21 164.8 L31.5 154.2 L32 165.7 L26.5 170.3 Z" fill="#123E80"/><path d="M21 164.8 L26.5 170.3 L16.5 174.8 Z" fill="#E8BE48"/><path d="M22.5 165.5 L31.2 157" stroke="#fff" stroke-width="1.1"/><path d="M21 164.8 L31.5 154.2" stroke="#3070C0" stroke-width=".7"/><rect x="6" y="181" width="28" height="26" fill="#FFFCC8"/><rect x="6" y="181" width="28" height="1" fill="#000"/><rect x="6" y="181" width="1" height="26" fill="#000"/><rect x="6" y="207" width="29" height="1" fill="#fff"/><rect x="34" y="181" width="1" height="27" fill="#fff"/><path d="M11 198.5 L30.5 194.5" stroke="#B8B090" stroke-width=".8" stroke-dasharray="1.5 1"/><path d="M18 187.5 Q25 188 24.5 192.5 Q24 195.5 20.5 197 Q17 199 17.5 202 Q18.5 205.5 25.5 205.5" fill="none" stroke="#1070D8" stroke-width="1.8"/><rect x="16" y="186" width="3" height="3" fill="#102850"/><rect x="24" y="204.5" width="3" height="3" fill="#102850"/><rect x="9.3" y="197.3" width="2.7" height="2.7" fill="#F00"/><rect x="29" y="193.2" width="2.7" height="2.7" fill="#F00"/><rect x="19.7" y="195.5" width="2.3" height="2.3" fill="#F01010"/><path d="M10 225.2 L23 233.2" stroke="#10203A" stroke-width="1.2"/><rect x="8" y="223.5" width="3.6" height="3.4" fill="#0A1830"/><rect x="21.2" y="231.5" width="3.6" height="3.4" fill="#0A1830"/><path d="M17.8 230.5 L20.5 222.5 L23.5 226.5 Z" fill="#E0E0EA" stroke="#404860" stroke-width=".6" stroke-dasharray="1 .8"/><path d="M20.5 222.5 L22.5 218 L29.5 223 L23.5 226.5 Z" fill="#F4F4FA" stroke="#505870" stroke-width=".5"/><path d="M22.5 218 L27.5 212 L32 212 L29.5 223 Z" fill="#1A4C98"/><path d="M24.5 216.5 L29 212.3" stroke="#fff" stroke-width="1"/><path d="M22.5 218.3 L29.5 223.3" stroke="#E87020" stroke-width="1.2"/><rect x="11.5" y="246.5" width="17" height="13" fill="url(#gBlue)" stroke="#1E3E78" stroke-width="1.3"/><circle cx="19" cy="282" r="8.6" fill="url(#gBlue)" stroke="#1E3E78" stroke-width="1.2"/><rect x="19.5" y="299.5" width="10.5" height="7" fill="url(#gOrange)" stroke="#C05010" stroke-width=".8"/><circle cx="13.2" cy="307" r="4.4" fill="#4A88D0" stroke="#1E4A88" stroke-width="1"/><path d="M23.70 308.70 L25.40 312.95 L29.98 313.26 L26.46 316.20 L27.58 320.64 L23.70 318.20 L19.82 320.64 L20.94 316.20 L17.42 313.26 L22.00 312.95 Z" fill="url(#gGreen)" stroke="#2A6A18" stroke-width=".7"/><text x="8.3" y="346.5" style="font-family:Liberation Serif,serif;font-style:italic" font-size="18.5" fill="#1A2848" textLength="23.3" lengthAdjust="spacingAndGlyphs">Aa</text><linearGradient id="gDrip" x1="0" y1="0" x2="0.3" y2="1"><stop offset="0" stop-color="#FF6A10"/><stop offset=".35" stop-color="#F0A030"/><stop offset=".65" stop-color="#80D040"/><stop offset="1" stop-color="#1878B0"/></linearGradient><path d="M10.2 368.5 Q11.5 367.5 12.5 368.5 L13 374 Q13.5 376 15.8 377 Q17 379.5 13.5 379.8 H9.5 Q8 379.5 8.3 378 Q9.5 376.5 9.8 374 Z" fill="url(#gDrip)"/><path d="M22.2 361.2 L31.8 370.3 L22.4 379.4 L12.5 368.6 Z" fill="#C8BCD4" stroke="#384858" stroke-width=".9" stroke-dasharray="1 .6"/><path d="M23.5 364.2 L29 370.1 L22.6 375.6 L17.1 370.3 Z" fill="#8A7A9A" stroke="#4A3A5A" stroke-width=".5" stroke-dasharray=".8 .6"/><path d="M18.8 366.5 Q20 357 22.3 357.5 Q23.5 358.5 23.5 361.5" fill="none" stroke="#1A2A48" stroke-width="1.3"/><path d="M21 400.5 Q27 396.5 32.5 397.5 Q28 400 21 401.5 Z" fill="#A8C4E0" opacity=".8"/><path d="M12.8 388 Q12.3 398.5 19.7 399.5 Q27 398.5 26.6 388 Z" fill="url(#gGlass)" stroke="#4A5868" stroke-width="1"/><ellipse cx="19.7" cy="388" rx="6.9" ry="1.7" fill="#E8ECF0" stroke="#4A5868" stroke-width=".9"/><rect x="18.3" y="399" width="2.8" height="6.5" fill="#D8DEE4" stroke="#4A5868" stroke-width=".8"/><ellipse cx="19.7" cy="406.2" rx="6.5" ry="1.8" fill="#F0F2F4" stroke="#4A5868" stroke-width=".9"/><path d="M15 415 H24.5 V422.5 H32.5 V434 H15 Z" fill="#505870" opacity=".75"/><path d="M12 417 H21.3 V425.3 H29.7 V435.5 H12 Z" fill="#6E9ACB" stroke="#3A5A88" stroke-width=".8"/><circle cx="13.3" cy="428.2" r="5.4" fill="#F8E070" stroke="#C0A020" stroke-width=".8"/><circle cx="12.3" cy="427" r="2.2" fill="#FFFBD8"/><rect x="10.8" y="433.5" width="5" height="4.5" fill="#505868"/><path d="M19 444 L30 455 L19 466 L8 455 Z" fill="#7E98B0"/><path d="M19 444 L8 455 L12.5 455 L19 448.5 Z" fill="#D8E4F0"/><path d="M19 444 L30 455 L25.5 455 L19 448.5 Z" fill="#A8BCD0"/><path d="M30 455 L19 466 L19 461.5 L25.5 455 Z" fill="#10182A"/><path d="M8 455 L19 466 L19 461.5 L12.5 455 Z" fill="#4A6078"/><path d="M19 448.5 L25.5 455 L19 461.5 L12.5 455 Z" fill="#7A98B8"/><circle cx="19" cy="483.2" r="9.3" fill="#8090B0" stroke="#303848" stroke-width="1"/><circle cx="19" cy="483.2" r="6" fill="none" stroke="#E0E4F0" stroke-width="1"/><circle cx="19" cy="483.2" r="3.6" fill="#D0D8E8" stroke="#303848" stroke-width="1"/><rect x="8.5" y="502.5" width="11.5" height="12" fill="#7AA0D0" stroke="#1E3E78" stroke-width="1"/><rect x="14" y="507" width="11" height="11.5" rx="2.5" fill="#50B8C0" stroke="#1E6070" stroke-width="1"/><circle cx="26" cy="516.5" r="5.3" fill="url(#gGreen)" stroke="#2A6A18" stroke-width=".8"/><path d="M9 512.5 L22 520" stroke="#F07020" stroke-width="2.5"/><path d="M19.5 516 L27 523.5 L18 522.5 Z" fill="#F07020"/><linearGradient id="gFlag" x1="0" y1="0" x2="1" y2="0"><stop offset="0" stop-color="#3A78C0"/><stop offset=".3" stop-color="#B8D4F0"/><stop offset=".65" stop-color="#C0D8F0"/><stop offset="1" stop-color="#2E68B0"/></linearGradient><path d="M11.5 549.5 C14.5 552 19 551.5 22.5 548 C25 546 27.5 546.5 30 549.5" fill="none" stroke="#505868" stroke-width="1.5" opacity=".5"/><path d="M10.1 535.1 C14 538 19 537 22 533.5 C24.5 531.5 27 532 28.6 534.5 V548.5 C26.5 545.5 24 545 21.5 547 C18 550.5 13 551 10.1 548.5 Z" fill="url(#gFlag)" stroke="#1E4A88" stroke-width=".9"/><path d="M8.5 561 L11 564" stroke="#C0C0C0" stroke-width="2.2"/><ellipse cx="14" cy="570.5" rx="6" ry="8" transform="rotate(-30 14 570.5)" fill="#C8C8C8"/><ellipse cx="17.5" cy="573" rx="3.2" ry="7.2" transform="rotate(-30 17.5 573)" fill="#D4D4D4" stroke="#C0C0C0" stroke-width=".6"/><path d="M21.5 567.8 L30.5 572.3 M19.5 575 L27 580" stroke="#D0D0D0" stroke-width="2.6" stroke-linecap="round"/><path d="M9.8 604.5 Q11 599 14.5 594.5 Q17.5 590.5 22 590 L29 590.8 Q32 592 31.5 595.5 L29.5 602 Q28 604 26 602.5 L24.5 600.5 Q23.5 603 22.5 606 Q21 609 18 609.5 Q14 610.5 11.5 609 Q9 607.5 9.8 604.5 Z" fill="url(#gHand)" stroke="#5A3A18" stroke-width=".9"/><path d="M11.5 606.5 L17 596 M14 608 L19 598 M16.5 608.5 L21 600" stroke="#7A5A28" stroke-width=".6"/><path d="M22 594 Q26 593 27.5 596" stroke="#FFFBE8" stroke-width="1.5" fill="none"/><linearGradient id="gMag" x1="0" y1="0" x2="1" y2="1"><stop offset="0" stop-color="#8A9AB0"/><stop offset=".55" stop-color="#C8D4E0"/><stop offset="1" stop-color="#9AAAC0"/></linearGradient><path d="M23.5 631.3 L31 638.8" stroke="#B05020" stroke-width="3.2" stroke-linecap="round"/><path d="M23.5 631.3 L31 638.8" stroke="#F8A070" stroke-width="1.4" stroke-linecap="round"/><path d="M21.5 629.5 L24 632" stroke="#2A3A50" stroke-width="2.6"/><circle cx="17.2" cy="624.8" r="6.5" fill="url(#gMag)" stroke="#1E3048" stroke-width="1.2"/><circle cx="43" cy="664" r="5.8" fill="#fff" stroke="#909090" stroke-width=".5"/><path d="M43 664 L43 658.2 A5.8 5.8 0 0 1 48.2 661.5 Z" fill="#F0E000"/><path d="M43 664 L48.2 661.5 A5.8 5.8 0 0 1 47.5 667.8 Z" fill="#20D020"/><path d="M43 664 L47.5 667.8 A5.8 5.8 0 0 1 41 669.5 Z" fill="#20E0E0"/><path d="M43 664 L41 669.5 A5.8 5.8 0 0 1 37.3 665 Z" fill="#1030F0"/><path d="M43 664 L37.3 665 A5.8 5.8 0 0 1 40 659 Z" fill="#fff"/><path d="M43 664 L40 659 A5.8 5.8 0 0 1 43 658.2 Z" fill="#F01010"/><path d="M54 657 L68 671 M68 657 L54 671 M54 664 L61 657 L68 664 L61 671 Z" fill="none" stroke="#000" stroke-width="1"/><path d="M299.5 657 L303 660.5 L299.5 664 L296 660.5 Z" fill="#000" stroke="#fff" stroke-width="1"/><path d="M467.5 657 L471 660.5 L467.5 664 L464 660.5 Z" fill="#000" stroke="#fff" stroke-width="1"/><rect x="717" y="687" width="17" height="15" fill="#F4F4FA"/><rect x="717" y="687" width="17" height="1" fill="#000"/><rect x="717" y="687" width="1" height="15" fill="#000"/><rect x="717" y="702" width="17" height="1" fill="#fff"/><circle cx="725.5" cy="695" r="4" fill="#1010E0"/><path d="M726 694 L726 701 L727.8 699.5 L729.5 702.5 L730.5 702 L729 699 L731 699 Z" fill="#000" stroke="#fff" stroke-width=".5"/><path d="M748 690.5 A4.5 4.5 0 1 1 751 699.5" fill="none" stroke="#A0A0A0" stroke-width="2"/><path d="M742 699.5 H750" stroke="#A0A0A0" stroke-width="1" stroke-dasharray="1 1"/><circle cx="767" cy="697" r="2.6" fill="none" stroke="#909090" stroke-width="1"/><rect x="773" y="689" width="3" height="10" fill="#909090"/><path d="M838.3 9.2 H845.6 Q844 13.2 842 13.2 Q840 13.2 838.3 9.2 Z" fill="#000"/><path d="M859.5 6 H866.5 V12.5 Z" fill="#000"/><path d="M879 7 L886 14 M886 7 L879 14" stroke="#000" stroke-width="2.2"/></g><rect x="440" y="56" width="13" height="15" fill="#F0F0F8" /><rect x="440" y="56" width="13" height="1" fill="#fff" /><rect x="440" y="56" width="1" height="15" fill="#fff" /><rect x="440" y="69" width="13" height="1" fill="#8A80C8" /><rect x="440" y="70" width="14" height="1" fill="#000" /><rect x="451" y="56" width="1" height="14" fill="#8A80C8" /><rect x="452" y="56" width="1" height="15" fill="#000" /><path d="M446.5 59 V67 M446.5 59 H448" stroke="#6060A0"/><rect x="547" y="88" width="13" height="15" fill="#F0F0F8" /><rect x="547" y="88" width="13" height="1" fill="#fff" /><rect x="547" y="88" width="1" height="15" fill="#fff" /><rect x="547" y="101" width="13" height="1" fill="#8A80C8" /><rect x="547" y="102" width="14" height="1" fill="#000" /><rect x="558" y="88" width="1" height="14" fill="#8A80C8" /><rect x="559" y="88" width="1" height="15" fill="#000" /><path d="M553.5 91 V99 M553.5 91 H555" stroke="#6060A0"/></svg></body></html>
